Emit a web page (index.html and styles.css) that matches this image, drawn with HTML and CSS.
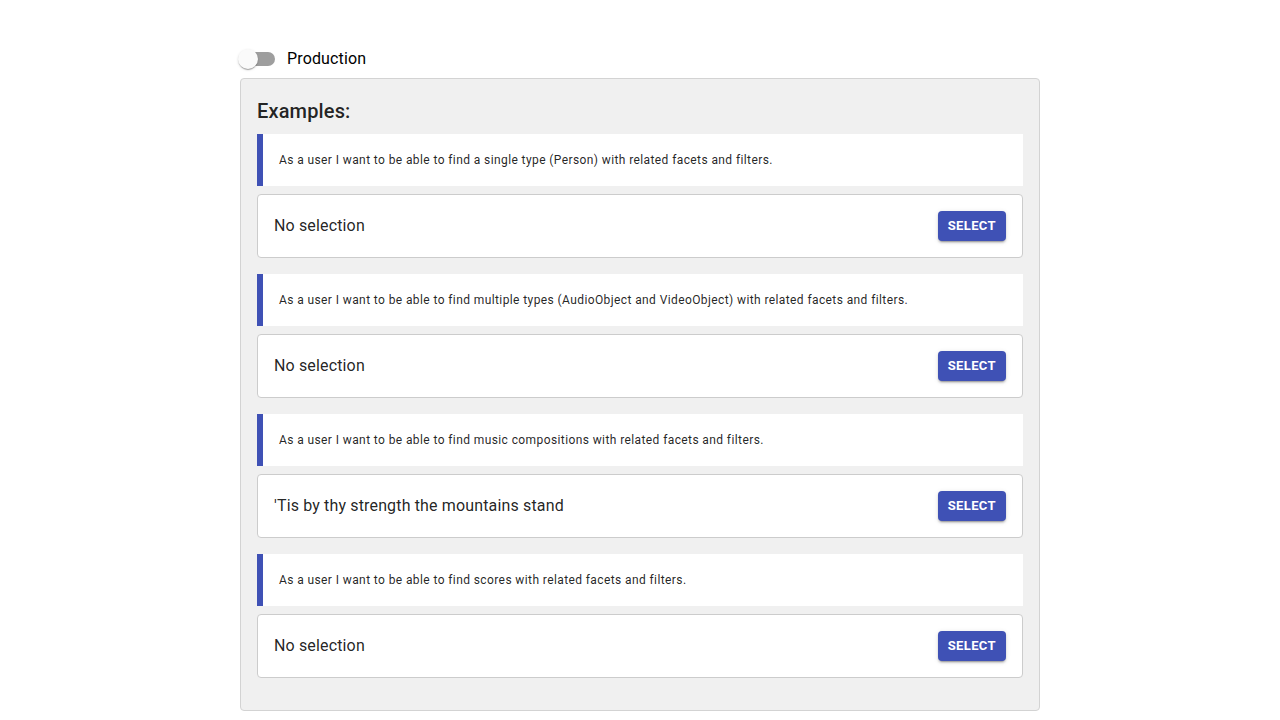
FILE: index.html
```html
<!DOCTYPE html>
<html lang="en">
<head>
<meta charset="utf-8">
<meta name="viewport" content="width=device-width, initial-scale=1">
<title>Examples</title>
<link rel="stylesheet" href="styles.css">
</head>
<body>
<main class="container">
  <label class="switch">
    <input class="switch-input" type="checkbox" role="switch">
    <span class="switch-label">Production</span>
  </label>
  <section class="panel">
    <h1 class="panel-title">Examples:</h1>
    <article class="example">
      <p class="story">As a user I want to be able to find a single type (Person) with related facets and filters.</p>
      <div class="card"><span class="selection">No selection</span><button class="button" type="button">Select</button></div>
    </article>
    <article class="example">
      <p class="story">As a user I want to be able to find multiple types (AudioObject and VideoObject) with related facets and filters.</p>
      <div class="card"><span class="selection">No selection</span><button class="button" type="button">Select</button></div>
    </article>
    <article class="example">
      <p class="story">As a user I want to be able to find music compositions with related facets and filters.</p>
      <div class="card"><span class="selection">'Tis by thy strength the mountains stand</span><button class="button" type="button">Select</button></div>
    </article>
    <article class="example">
      <p class="story">As a user I want to be able to find scores with related facets and filters.</p>
      <div class="card"><span class="selection">No selection</span><button class="button" type="button">Select</button></div>
    </article>
  </section>
</main>
</body>
</html>
```
FILE: styles.css
```css
* { box-sizing: border-box; }

body {
  margin: 0;
  background: #fff;
  color: rgba(0, 0, 0, 0.87);
  font-family: Roboto, "Liberation Sans", sans-serif;
  font-size: 16px;
  line-height: 24px;
}

.container {
  max-width: 800px;
  margin: 0 auto;
  padding-top: 40px;
}

.switch {
  display: flex;
  align-items: center;
  width: fit-content;
  height: 38px;
  gap: 12px;
  color: #000;
  cursor: pointer;
}

.switch-input {
  appearance: none;
  position: relative;
  width: 34px;
  height: 14px;
  margin: 0 0 0 1px;
  border-radius: 7px;
  background: #9e9e9e;
  cursor: pointer;
}

.switch-input::before {
  content: "";
  position: absolute;
  top: -3px;
  left: -3px;
  width: 20px;
  height: 20px;
  border-radius: 50%;
  background: #fafafa;
  box-shadow: 0 2px 1px -1px rgba(0, 0, 0, 0.2), 0 1px 1px rgba(0, 0, 0, 0.14), 0 1px 3px rgba(0, 0, 0, 0.12);
}

.switch-input:checked { background: #9fa8da; }
.switch-input:checked::before { left: 17px; background: #3f51b5; }

.switch-label { letter-spacing: 0.15px; }

.panel {
  padding: 16px 16px 32px;
  border: 1px solid #d3d3d3;
  border-radius: 4px;
  background: #f0f0f0;
}

.panel-title {
  margin: 0 0 7px;
  font-size: 20px;
  line-height: 32px;
  font-weight: 500;
  letter-spacing: 0.15px;
}

.example + .example { margin-top: 16px; }

.story {
  margin: 0 0 8px;
  padding: 16px;
  border-left: 6px solid #3f51b5;
  background: #fff;
  font-size: 12px;
  line-height: 20px;
  letter-spacing: 0.4px;
}

.card {
  display: flex;
  align-items: center;
  justify-content: space-between;
  gap: 16px;
  min-height: 64px;
  padding: 16px;
  border: 1px solid #ccc;
  border-radius: 4px;
  background: #fff;
}

.selection { letter-spacing: 0.15px; }

.button {
  padding: 4px 10px;
  border: 0;
  border-radius: 4px;
  background: #3f51b5;
  color: #fff;
  font: 700 13px/22px Roboto, "Liberation Sans", sans-serif;
  letter-spacing: 0.02857em;
  text-transform: uppercase;
  box-shadow: 0 3px 1px -2px rgba(0, 0, 0, 0.2), 0 2px 2px rgba(0, 0, 0, 0.14), 0 1px 5px rgba(0, 0, 0, 0.12);
  cursor: pointer;
}
```
